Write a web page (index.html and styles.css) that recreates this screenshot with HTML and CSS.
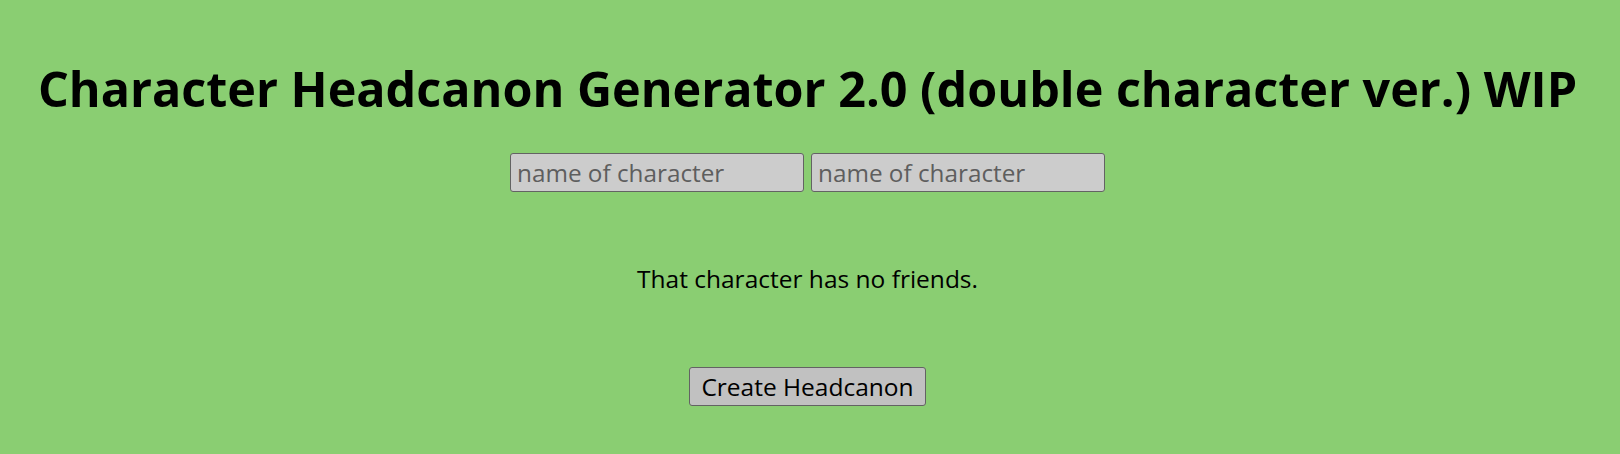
FILE: index.html
```html
<!DOCTYPE html>
<html lang="en">
<head>
<meta charset="utf-8">
<title>Character Headcanon Generator 2.0</title>
<link rel="stylesheet" href="styles.css">
</head>
<body>
<main class="page">
  <h1 class="title">Character Headcanon Generator 2.0 (double character ver.) WIP</h1>
  <div class="inputs">
    <input class="name-input" type="text" placeholder="name of character">
    <input class="name-input" type="text" placeholder="name of character">
  </div>
  <p class="result">That character has no friends.</p>
  <button class="create-btn" type="button">Create Headcanon</button>
</main>
</body>
</html>
```

FILE: styles.css
```css
html, body {
  margin: 0;
  padding: 0;
}
body {
  background: #8ace72;
  font-family: "Open Sans", "Noto Sans", sans-serif;
  color: #000;
  height: 454px;
  overflow: hidden;
}
.page {
  display: flex;
  flex-direction: column;
  align-items: center;
  padding-top: 58px;
  padding-right: 5px;
}
.title {
  margin: 0;
  font-size: 48.5px;
  line-height: 60px;
  font-weight: 700;
  white-space: nowrap;
}
.inputs {
  display: flex;
  gap: 7px;
  margin-top: 35px;
}
.name-input {
  box-sizing: border-box;
  width: 294px;
  height: 39px;
  margin: 0;
  padding: 0 6px;
  background: #cccccc;
  border: 1px solid #636363;
  border-radius: 3px;
  font-family: inherit;
  font-size: 24.3px;
  color: #000;
  outline: none;
}
.name-input::placeholder {
  color: #5e5e5e;
  opacity: 1;
}
.result {
  margin: 72px 0 0;
  font-size: 24.5px;
  line-height: 30px;
}
.create-btn {
  box-sizing: border-box;
  margin-top: 73px;
  width: 237px;
  height: 39px;
  padding: 0;
  background: #c1c1c1;
  border: 1px solid #636363;
  border-radius: 3px;
  font-family: inherit;
  font-size: 24.5px;
  color: #000;
}
```
